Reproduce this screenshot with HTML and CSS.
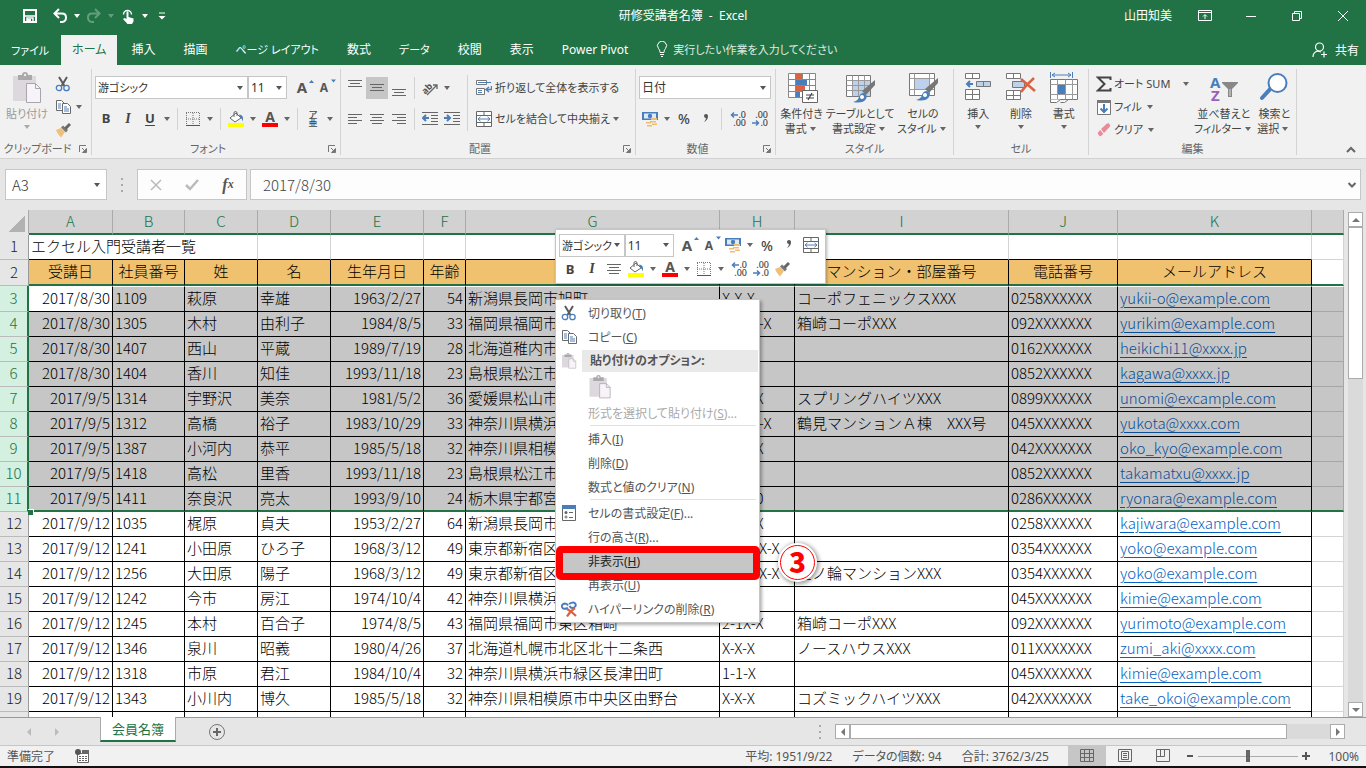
FILE: index.html
```html
<!DOCTYPE html>
<html lang="ja">
<head>
    <meta charset="UTF-8">
    <meta name="viewport" content="width=device-width, initial-scale=1.0">
    <title>研修受講者名簿 - Excel</title>
    <link rel="stylesheet" href="styles.css">
</head>
<body>

    <!-- アイコン -->
    <svg class="defs" aria-hidden="true">
        <symbol id="i-cut" viewBox="0 0 16 16"><path d="M4 1l5.500 9M12 1L6.500 10" stroke="#5a5a5a" stroke-width="2" fill="none"/><circle cx="4" cy="12" r="2.700" fill="none" stroke="#4a7ebb" stroke-width="1.300"/><circle cx="11.500" cy="12" r="2.700" fill="none" stroke="#4a7ebb" stroke-width="1.300"/></symbol>
        <symbol id="i-copy" viewBox="0 0 16 16"><path d="M1.500 1.500h5l3 3v7h-8z" fill="#fff" stroke="#6a6a6a"/><path d="M7.500 4.500h5l3 3v7h-8z" fill="#fff" stroke="#6a6a6a"/><path d="M3 5h3M3 7h3M3 9h3M9 8h3M9 10h5M9 12h5" stroke="#4a7ebb"/></symbol>
        <symbol id="i-brush" viewBox="0 0 16 16"><path d="M1 8l5-2 4 4-4 5.500C4 13 2 11 1 8z" fill="#eec07c"/><path d="M6 5.500l5 5 2-2.500-5-4.500z" fill="#777"/><path d="M10.500 6.500L15 2" stroke="#666" stroke-width="3"/></symbol>
        <symbol id="i-paste" viewBox="0 0 30 32"><path d="M1 4h23v25H1z" fill="#ddd8dd"/><path d="M6 3h4q0-3 3-3t3 3h4v5H6z" fill="#a9a9a9"/><circle cx="13" cy="3" r="1.200" fill="#eee"/><path d="M14.500 11.500h9l5 5v14h-14z" fill="#f7f3f9" stroke="#a9a5ad"/><path d="M23.500 11.500v5h5" fill="none" stroke="#a9a5ad"/></symbol>
        <symbol id="i-grow" viewBox="0 0 16 16"><path d="M11 5l2.500-3L16 5z" fill="#4a7ebb"/></symbol>
        <symbol id="i-shrink" viewBox="0 0 16 16"><path d="M11 1.500h5l-2.500 3z" fill="#4a7ebb"/></symbol>
        <symbol id="i-border" viewBox="0 0 16 16"><path d="M1.500 2v12M8 2v12M14.500 2v12M1 1.500h14M1 8h14" stroke="#777" stroke-dasharray="1 1"/><path d="M1 14.500h14" stroke="#555"/></symbol>
        <symbol id="i-fill" viewBox="0 0 16 16"><path d="M2 7l6-5 5 5-6 4z" fill="#fff" stroke="#666"/><path d="M6 6V2q0-1.500 1.500-1.500T9 2v3" fill="none" stroke="#666"/><path d="M11 3.500q5 0 4 7-1-3-3-4z" fill="#4a7ebb"/><path d="M0 12h16v4H0z" fill="#ff0"/></symbol>
        <symbol id="i-money" viewBox="0 0 16 16"><path d="M0 1h16v8H0z" fill="#4a7ebb"/><path d="M2 2.500h12v5H2z" fill="#dcebf7"/><circle cx="8" cy="5" r="2.200" fill="#4a7ebb"/><path d="M9 7h6v2H9zM8 10h6v1.500H8zM10 12.500h5V14h-5zM4 11h5v1.500H4zM5 14h5v1.500H5z" fill="#eebd72"/></symbol>
        <symbol id="i-comma" viewBox="0 0 16 16"><path d="M6 5a2 2 0 1 1 4 0q0 4-4 6 2-2 2-4-2 0-2-2z" fill="#555"/></symbol>
        <symbol id="i-merge" viewBox="0 0 16 16"><path d="M.500.500h15v15H.500zM.500 4.500h15M.500 11.500h15M8 .500v4M8 11.500v4" fill="#fff" stroke="#666"/><path d="M2 8h12M4.500 5.800L2 8l2.500 2.200M11.500 5.800L14 8l-2.500 2.200" fill="none" stroke="#4a7ebb"/></symbol>
        <symbol id="i-wrap" viewBox="0 0 16 16"><path d="M.500.500h10v4H.500zM.500 8.500h8v6H.500z" fill="#fff" stroke="#777"/><path d="M2 2.500h13M2 10.500h4M2 12.500h4" stroke="#4a7ebb"/><path d="M15.500 6v3.500H11M13 7l-3 2.500 3 2.500" stroke="#4a7ebb" stroke-width="1.400" fill="none"/></symbol>
        <symbol id="i-left" viewBox="0 0 16 16"><path d="M1 3.500h14M1 6.500h9M1 9.500h14M1 12.500h9" stroke="#666"/></symbol>
        <symbol id="i-center" viewBox="0 0 16 16"><path d="M1 3.500h14M3 6.500h10M1 9.500h14M3 12.500h10" stroke="#666"/></symbol>
        <symbol id="i-right" viewBox="0 0 16 16"><path d="M1 3.500h14M6 6.500h9M1 9.500h14M6 12.500h9" stroke="#666"/></symbol>
        <symbol id="i-top" viewBox="0 0 16 16"><path d="M1 .500h14M3 3.500h10M1 6.500h14" stroke="#666"/></symbol>
        <symbol id="i-middle" viewBox="0 0 16 16"><path d="M1 4.500h14M3 7.500h10M1 10.500h14" stroke="#666"/></symbol>
        <symbol id="i-bottom" viewBox="0 0 16 16"><path d="M1 9.500h14M3 12.500h10M1 15.500h14" stroke="#666"/></symbol>
        <symbol id="i-outdent" viewBox="0 0 16 16"><path d="M0 1.500h16M9 4.500h7M9 7.500h7M9 10.500h7M0 13.500h16" stroke="#666"/><path d="M7 7H2M4 4L1 7l3 3" stroke="#4a7ebb" stroke-width="2" fill="none"/></symbol>
        <symbol id="i-indent" viewBox="0 0 16 16"><path d="M0 1.500h16M9 4.500h7M9 7.500h7M9 10.500h7M0 13.500h16" stroke="#666"/><path d="M0 7h5M3 4l3 3-3 3" stroke="#4a7ebb" stroke-width="2" fill="none"/></symbol>
        <symbol id="i-arrow-l" viewBox="0 0 8 8"><path d="M8 4H2M4 1.500L1.500 4 4 6.500" stroke="#4a7ebb" stroke-width="1.500" fill="none"/></symbol>
        <symbol id="i-arrow-r" viewBox="0 0 8 8"><path d="M0 4h6M4 1.500L6.500 4 4 6.500" stroke="#4a7ebb" stroke-width="1.500" fill="none"/></symbol>
        <symbol id="i-launch" viewBox="0 0 8 8"><path d="M.500 7V.500H7" fill="none" stroke="#777"/><path d="M3 3l3 3" stroke="#777"/><path d="M7.500 3.500v4h-4z" stroke="#777" fill="#777"/></symbol>
        <symbol id="i-cond" viewBox="0 0 32 32"><path d="M2.500 1.500h27v24h-27zM2.500 7.500h27M2.500 13.500h27M2.500 19.500h27M9.500 1.500v24M16.500 1.500v24M23.500 1.500v24" fill="#fff" stroke="#888"/><path d="M10 2h6v5h-6zM10 14h9v5h-9z" fill="#dc6141"/><path d="M10 8h11v5H10zM10 20h4v5h-4z" fill="#4a7ebb"/><path d="M16.500 18.500h15v12h-15z" fill="#fff" stroke="#666"/><path d="M20 23h8M20 26h8M26 21l-4 7" stroke="#444" stroke-width="1.200"/></symbol>
        <symbol id="i-table" viewBox="0 0 32 32"><path d="M2.500 3.500h24v21h-24z" fill="#fff" stroke="#777"/><path d="M9 9h17v15H9z" fill="#bdd2ea"/><path d="M2.500 8.500h24M2.500 13.500h24M2.500 18.500h24M8.500 3.500v21M14.500 3.500v21M20.500 3.500v21" stroke="#999"/><path d="M31 8v5l-9 10-4-4z" fill="#777"/><path d="M9 30q5-1 6-5 1-4 5-4 4 2 2 6-3 5-13 3z" fill="#4a7ebb"/><circle cx="18" cy="25" r="2" fill="#fff"/></symbol>
        <symbol id="i-cell" viewBox="0 0 32 32"><path d="M2.500 1.500h25v22h-25z" fill="#fff" stroke="#777"/><path d="M2.500 6.500h25M2.500 17.500h25M7.500 1.500v22M22.500 1.500v22" stroke="#999"/><path d="M8 7h14v10H8z" fill="#bdd2ea"/><path d="M31 6v5l-9 10-4-4z" fill="#777"/><path d="M9 28q5-1 6-5 1-4 5-4 4 2 2 6-3 5-13 3z" fill="#4a7ebb"/><circle cx="18" cy="23" r="2" fill="#fff"/></symbol>
        <symbol id="i-insert" viewBox="0 0 32 32"><path d="M3.500 1.500h14v5h-14zM10.500 1.500v5M3.500 17.500h14v10h-14zM10.500 17.500v10M3.500 22.500h14" fill="#fff" stroke="#777"/><path d="M14.500 9.500h14v5h-14zM21.500 9.500v5" fill="#bdd2ea" stroke="#777"/><path d="M11 12H5M8 9l-3 3 3 3" stroke="#4a7ebb" stroke-width="2" fill="none"/></symbol>
        <symbol id="i-delete" viewBox="0 0 32 32"><path d="M1.500 1.500h14v5h-14zM8.500 1.500v5M1.500 18.500h14v9h-14zM8.500 18.500v9M1.500 23.500h14" fill="#fff" stroke="#777"/><path d="M7.500 9.500h12v6h-12z" fill="#bdd2ea" stroke="#777"/><path d="M16 7q7 6 14 12M29 6q-8 7-13 14" stroke="#dc6141" stroke-width="2.500" fill="none"/></symbol>
        <symbol id="i-format" viewBox="0 0 32 32"><path d="M2.500 0v6M24.500 0v6M4 3h19M7 1L4 3l3 2M20 1l3 2-3 2" stroke="#4a7ebb" fill="none"/><path d="M2.500 7.500h27v20h-27z" fill="#fff" stroke="#777"/><path d="M2.500 12.500h27M2.500 22.500h27M9.500 7.500v20M17.500 7.500v20M24.500 7.500v20" stroke="#999"/><path d="M10 13h7v9h-7z" fill="#4a7ebb"/><path d="M2.500 27.500v3h6l4-3M12.500 30.500h4l4-3" fill="#fff" stroke="#777"/></symbol>
        <symbol id="i-sum" viewBox="0 0 16 16"><path d="M14.500 4V1.500H2L8.500 8 2 14.500h12.500V12" fill="none" stroke="#444" stroke-width="2"/></symbol>
        <symbol id="i-down" viewBox="0 0 16 16"><path d="M1.500 2.500h13v13h-13z" fill="#fff" stroke="#777"/><path d="M1 1h14v3H1z" fill="#777"/><path d="M8 5v8M4.500 9.500L8 13l3.500-3.500" fill="none" stroke="#4a7ebb" stroke-width="2"/></symbol>
        <symbol id="i-erase" viewBox="0 0 16 16"><path d="M5 7l6-5.500q1-.500 2 0l1 1.500q.500 1-.500 2L8 11z" fill="#ea8b9b"/><path d="M4.300 8l3 4-2.300 2q-1 .500-2-.500l-1-1.500q-.500-1 .300-2z" fill="#ea8b9b"/></symbol>
        <symbol id="i-filter" viewBox="0 0 16 16"><path d="M0 1h16v1L10 8v8H6V8L0 2z" fill="#888"/><path d="M8 8v7" stroke="#ddd"/></symbol>
        <symbol id="i-find" viewBox="0 0 32 32"><path d="M13 16L4 26" stroke="#4a7ebb" stroke-width="4" stroke-linecap="round"/><circle cx="19.500" cy="11" r="9" fill="#fff" stroke="#4a7ebb" stroke-width="2"/></symbol>
        <symbol id="i-cellformat" viewBox="0 0 16 16"><path d="M1.500 1.500h13v14h-13z" fill="#fff" stroke="#666"/><path d="M1 0h14v4H1z" fill="#4a7ebb"/><circle cx="5" cy="7.500" r="1.500" fill="#666"/><circle cx="5" cy="12" r="1" fill="none" stroke="#666"/><path d="M8 7.500h4M8 12.500h4" stroke="#666"/></symbol>
        <symbol id="i-unlink" viewBox="0 0 16 16"><path d="M7 7q-5 2-6-1-.500-3 3-3.500 2 0 3 2M8 3q5-3 6.500 0 1 3-3 4-2 0-3-2" fill="none" stroke="#4a7ebb" stroke-width="2"/><path d="M6 8q4 2 9 7M14 7q-5 3-8 8.500" stroke="#dc6141" stroke-width="2.200" fill="none"/></symbol>
    </svg>

    <header class="titlebar">
        <div class="quick">
            <button class="qbtn" aria-label="上書き保存"><svg width="16" height="16" viewBox="0 0 16 16"><path d="M2 2h12v12H2z" fill="none" stroke="#fff" stroke-width="2"/><path d="M3 8h10M5 14v-4h6v4" fill="none" stroke="#fff" stroke-width="1.500"/><path d="M5 11h4v3H5z" fill="#fff"/></svg></button>
            <button class="qbtn" aria-label="元に戻す"><svg width="16" height="16" viewBox="0 0 16 16"><path d="M3 5.500h7q4 0 4 4t-4 4.500H8M7 1L2.500 5.500 7 10" fill="none" stroke="#fff" stroke-width="2"/></svg></button>
            <i class="tri"></i>
            <button class="qbtn dim" aria-label="やり直し"><svg width="16" height="16" viewBox="0 0 16 16"><path d="M13 5.500H6q-4 0-4 4T6 14h2M9 1l4.500 4.500L9 10" fill="none" stroke="#fff" stroke-width="2"/></svg></button>
            <i class="tri dim"></i>
            <button class="qbtn" aria-label="タッチ"><svg width="16" height="16" viewBox="0 0 16 16"><path d="M3.500 6.500a4 4 0 1 1 8 0" fill="none" stroke="#fff" stroke-width="1.500"/><path d="M6.500 4q1-1.500 2 0v5l5 1.500v3L12 16H7.500L3 11l1.500-1 2 1z" fill="#fff"/></svg></button>
            <i class="tri"></i>
            <button class="qbtn" aria-label="カスタマイズ"><svg width="8" height="8" viewBox="0 0 8 8"><path d="M1 1h6" stroke="#fff"/><path d="M.500 4h7L4 7.500z" fill="#fff"/></svg></button>
        </div>
        <h1 class="title">研修受講者名簿&nbsp; -&nbsp; Excel</h1>
        <div class="window-controls">
            <span class="user">山田知美</span>
            <button aria-label="リボンの表示オプション"><svg width="14" height="12" viewBox="0 0 14 12"><path d="M.500.500h13v10H.500zM.500 2.500h13M7 9V5M5 6.500L7 4.500l2 2" fill="none" stroke="#fff"/></svg></button>
            <button aria-label="最小化"><svg width="12" height="12" viewBox="0 0 12 12"><path d="M1 6.500h10" stroke="#fff"/></svg></button>
            <button aria-label="元に戻す(縮小)"><svg width="12" height="12" viewBox="0 0 12 12"><path d="M1.500 3.500h7v7h-7zM3.500 3V1.500h7v7H9" fill="none" stroke="#fff"/></svg></button>
            <button aria-label="閉じる"><svg width="12" height="12" viewBox="0 0 12 12"><path d="M1 1l10 10M11 1L1 11" stroke="#fff"/></svg></button>
        </div>
    </header>

    <nav class="tabs">
        <button class="tab kana file">ファイル</button>
        <button class="tab active">ホーム</button>
        <button class="tab">挿入</button>
        <button class="tab">描画</button>
        <button class="tab kana">ページ レイアウト</button>
        <button class="tab">数式</button>
        <button class="tab kana">データ</button>
        <button class="tab">校閲</button>
        <button class="tab">表示</button>
        <button class="tab">Power Pivot</button>
        <button class="tab kana tellme"><svg width="12" height="16" viewBox="0 0 12 16"><path d="M4 11.500Q4 9 2.500 7.500a4.500 4.500 0 1 1 7 0Q8 9 8 11.500zM4 13.500h4M5 15.500h2" fill="none" stroke="#fff"/></svg>実行したい作業を入力してください</button>
        <button class="tab share"><svg width="16" height="16" viewBox="0 0 16 16"><circle cx="7.500" cy="5" r="4" fill="none" stroke="#fff" stroke-width="1.200"/><path d="M1 15q0-5 5-6l3 1M12 9.500v6M9 12.500h6" fill="none" stroke="#fff" stroke-width="1.200"/></svg>共有</button>
    </nav>

    <section class="ribbon">
        <div class="group g-clip">
            <div class="body">
                <button class="big disabled"><svg width="30" height="32"><use href="#i-paste"/></svg><span>貼り付け</span><i class="tri"></i></button>
                <div class="stack">
                    <button class="line" aria-label="切り取り"><svg width="16" height="16"><use href="#i-cut"/></svg></button>
                    <button class="line" aria-label="コピー"><svg width="16" height="16"><use href="#i-copy"/></svg><i class="tri"></i></button>
                    <button class="line" aria-label="書式のコピー"><svg width="16" height="16"><use href="#i-brush"/></svg></button>
                </div>
            </div>
            <div class="name">クリップボード<svg width="8" height="8"><use href="#i-launch"/></svg></div>
        </div>

        <div class="group g-font">
            <div class="body rows">
                <div class="row">
                    <span class="combo wide"><select aria-label="フォント"><option>游ゴシック</option></select></span>
                    <span class="combo size"><select aria-label="フォント サイズ"><option>11</option></select></span>
                    <button class="ic letter" aria-label="フォント サイズの拡大">A<svg width="16" height="16"><use href="#i-grow"/></svg></button>
                    <button class="ic letter small" aria-label="フォント サイズの縮小">A<svg width="16" height="16"><use href="#i-shrink"/></svg></button>
                </div>
                <div class="row">
                    <button class="ic bold">B</button>
                    <button class="ic italic">I</button>
                    <button class="ic under">U</button>
                    <i class="tri"></i><i class="sep"></i>
                    <button class="ic" aria-label="罫線"><svg width="16" height="16"><use href="#i-border"/></svg></button>
                    <i class="tri"></i><i class="sep"></i>
                    <button class="ic" aria-label="塗りつぶしの色"><svg width="16" height="16"><use href="#i-fill"/></svg></button>
                    <i class="tri"></i>
                    <button class="ic color"><span>A</span></button>
                    <i class="tri"></i><i class="sep"></i>
                    <button class="ic ruby"><span>ア</span><span>亜</span></button>
                    <i class="tri"></i>
                </div>
            </div>
            <div class="name">フォント<svg width="8" height="8"><use href="#i-launch"/></svg></div>
        </div>

        <div class="group g-align">
            <div class="body">
                <div class="rows">
                    <div class="row">
                        <button class="ic" aria-label="上揃え"><svg width="16" height="16"><use href="#i-top"/></svg></button>
                        <button class="ic on" aria-label="上下中央揃え"><svg width="16" height="16"><use href="#i-middle"/></svg></button>
                        <button class="ic" aria-label="下揃え"><svg width="16" height="16"><use href="#i-bottom"/></svg></button>
                        <i class="sep"></i>
                        <button class="ic" aria-label="方向"><svg width="18" height="18" viewBox="0 0 18 18"><text x="1" y="12" transform="rotate(-45 7 10)" font-family="Noto Sans" font-size="9" font-weight="bold" fill="#555">ab</text><path d="M6 16l10-10M12 6h4v4" stroke="#666" stroke-width="1.300" fill="none"/></svg></button>
                        <i class="tri"></i>
                    </div>
                    <div class="row">
                        <button class="ic" aria-label="左揃え"><svg width="16" height="16"><use href="#i-left"/></svg></button>
                        <button class="ic" aria-label="中央揃え"><svg width="16" height="16"><use href="#i-center"/></svg></button>
                        <button class="ic" aria-label="右揃え"><svg width="16" height="16"><use href="#i-right"/></svg></button>
                        <i class="sep"></i>
                        <button class="ic" aria-label="インデントを減らす"><svg width="16" height="16"><use href="#i-outdent"/></svg></button>
                        <button class="ic" aria-label="インデントを増やす"><svg width="16" height="16"><use href="#i-indent"/></svg></button>
                    </div>
                </div>
                <i class="sep tall"></i>
                <div class="rows">
                    <div class="row"><button class="line"><svg width="16" height="16"><use href="#i-wrap"/></svg>折り返して全体を表示する</button></div>
                    <div class="row"><button class="line"><svg width="16" height="16"><use href="#i-merge"/></svg>セルを結合して中央揃え</button><i class="tri end"></i></div>
                </div>
            </div>
            <div class="name">配置<svg width="8" height="8"><use href="#i-launch"/></svg></div>
        </div>

        <div class="group g-num">
            <div class="body rows">
                <div class="row"><span class="combo full"><select aria-label="表示形式"><option>日付</option></select></span></div>
                <div class="row">
                    <button class="ic" aria-label="通貨表示形式"><svg width="16" height="16"><use href="#i-money"/></svg></button>
                    <i class="tri"></i>
                    <button class="ic percent">%</button>
                    <button class="ic" aria-label="桁区切りスタイル"><svg width="16" height="16"><use href="#i-comma"/></svg></button>
                    <i class="sep"></i>
                    <button class="ic dec"><span><svg width="8" height="8"><use href="#i-arrow-l"/></svg>.0</span><span>.00</span></button>
                    <button class="ic dec"><span>.00</span><span><svg width="8" height="8"><use href="#i-arrow-r"/></svg>.0</span></button>
                </div>
            </div>
            <div class="name">数値<svg width="8" height="8"><use href="#i-launch"/></svg></div>
        </div>

        <div class="group g-style">
            <div class="body">
                <button class="big"><svg width="32" height="32"><use href="#i-cond"/></svg><span>条件付き</span><span>書式<i class="tri"></i></span></button>
                <button class="big"><svg width="32" height="32"><use href="#i-table"/></svg><span>テーブルとして</span><span>書式設定<i class="tri"></i></span></button>
                <button class="big"><svg width="32" height="32"><use href="#i-cell"/></svg><span>セルの</span><span>スタイル<i class="tri"></i></span></button>
            </div>
            <div class="name">スタイル</div>
        </div>

        <div class="group g-cells">
            <div class="body">
                <button class="big"><svg width="32" height="32"><use href="#i-insert"/></svg><span>挿入</span><i class="tri"></i></button>
                <button class="big"><svg width="32" height="32"><use href="#i-delete"/></svg><span>削除</span><i class="tri"></i></button>
                <button class="big"><svg width="32" height="32"><use href="#i-format"/></svg><span>書式</span><i class="tri"></i></button>
            </div>
            <div class="name">セル</div>
        </div>

        <div class="group g-edit">
            <div class="body">
                <div class="stack">
                    <button class="line"><svg width="16" height="16"><use href="#i-sum"/></svg>オート SUM<i class="tri"></i></button>
                    <button class="line"><svg width="16" height="16"><use href="#i-down"/></svg>フィル<i class="tri"></i></button>
                    <button class="line"><svg width="16" height="16"><use href="#i-erase"/></svg>クリア<i class="tri"></i></button>
                </div>
                <button class="big"><span class="sort"><span class="az"><b>A</b><b>Z</b></span><svg width="16" height="16"><use href="#i-filter"/></svg></span><span>並べ替えと</span><span>フィルター<i class="tri"></i></span></button>
                <button class="big"><svg width="32" height="32"><use href="#i-find"/></svg><span>検索と</span><span>選択<i class="tri"></i></span></button>
            </div>
            <div class="name">編集</div>
        </div>
        <button class="collapse" aria-label="リボンを折りたたむ"><svg width="10" height="8" viewBox="0 0 10 8"><path d="M1 6l4-4 4 4" fill="none" stroke="#666" stroke-width="2"/></svg></button>
    </section>

    <section class="formula-bar">
        <span class="combo namebox"><select aria-label="名前ボックス"><option>A3</option></select></span>
        <i class="dots"></i>
        <div class="fx">
            <button aria-label="キャンセル"><svg width="12" height="12" viewBox="0 0 12 12"><path d="M1 1l10 10M11 1L1 11" stroke="#bbb" stroke-width="1.500"/></svg></button>
            <button aria-label="入力"><svg width="14" height="12" viewBox="0 0 14 12"><path d="M1 6l4 4 8-9" fill="none" stroke="#bbb" stroke-width="2.500"/></svg></button>
            <button class="fn">f<small>x</small></button>
        </div>
        <div class="formula">
            <input type="text" aria-label="数式バー" value="2017/8/30">
            <svg width="10" height="8" viewBox="0 0 10 8"><path d="M1.500 2L5 5.500 8.500 2" fill="none" stroke="#666" stroke-width="2"/></svg>
        </div>
    </section>

    <main class="sheet">
        <div class="grid">
            <table>
                <colgroup>
                    <col class="c-head"><col class="c-a"><col class="c-b"><col class="c-name"><col class="c-name"><col class="c-e"><col class="c-f"><col class="c-g"><col class="c-h"><col class="c-i"><col class="c-j"><col class="c-k"><col>
                </colgroup>
                <thead>
                    <tr><th class="corner"></th><th>A</th><th>B</th><th>C</th><th>D</th><th>E</th><th>F</th><th>G</th><th>H</th><th>I</th><th>J</th><th>K</th><th></th></tr>
                </thead>
                <tbody>
                    <tr class="caption"><th>1</th><td colspan="3">エクセル入門受講者一覧</td><td></td><td></td><td></td><td></td><td></td><td></td><td></td><td></td><td></td></tr>
                    <tr class="fields"><th>2</th><td>受講日</td><td>社員番号</td><td>姓</td><td>名</td><td>生年月日</td><td>年齢</td><td></td><td></td><td>マンション・部屋番号</td><td>電話番号</td><td>メールアドレス</td><td></td></tr>
                    <tr class="sel first"><th>3</th><td>2017/8/30</td><td>1109</td><td>萩原</td><td>幸雄</td><td>1963/2/27</td><td>54</td><td>新潟県長岡市旭町</td><td>X-X-X</td><td>コーポフェニックスXXX</td><td>0258XXXXXX</td><td><a href="#">yukii-o@example.com</a></td><td></td></tr>
                    <tr class="sel"><th>4</th><td>2017/8/30</td><td>1305</td><td>木村</td><td>由利子</td><td>1984/8/5</td><td>33</td><td>福岡県福岡市</td><td>12-1X-X</td><td>箱崎コーポXXX</td><td>092XXXXXXX</td><td><a href="#">yurikim@example.com</a></td><td></td></tr>
                    <tr class="sel"><th>5</th><td>2017/8/30</td><td>1407</td><td>西山</td><td>平蔵</td><td>1989/7/19</td><td>28</td><td>北海道稚内市</td><td>X-XX</td><td></td><td>0162XXXXXX</td><td><a href="#">heikichi11@xxxx.jp</a></td><td></td></tr>
                    <tr class="sel"><th>6</th><td>2017/8/30</td><td>1404</td><td>香川</td><td>知佳</td><td>1993/11/18</td><td>23</td><td>島根県松江市</td><td></td><td></td><td>0852XXXXXX</td><td><a href="#">kagawa@xxxx.jp</a></td><td></td></tr>
                    <tr class="sel"><th>7</th><td>2017/9/5</td><td>1314</td><td>宇野沢</td><td>美奈</td><td>1981/5/2</td><td>36</td><td>愛媛県松山市</td><td>2-1X-X</td><td>スプリングハイツXXX</td><td>0899XXXXXX</td><td><a href="#">unomi@excample.com</a></td><td></td></tr>
                    <tr class="sel"><th>8</th><td>2017/9/5</td><td>1312</td><td>高橋</td><td>裕子</td><td>1983/10/29</td><td>33</td><td>神奈川県横浜市</td><td>12-1X-X</td><td>鶴見マンションＡ棟　XXX号</td><td>045XXXXXXX</td><td><a href="#">yukota@xxxx.com</a></td><td></td></tr>
                    <tr class="sel"><th>9</th><td>2017/9/5</td><td>1387</td><td>小河内</td><td>恭平</td><td>1985/5/18</td><td>32</td><td>神奈川県相模原市</td><td>2-1X-X</td><td></td><td>042XXXXXXX</td><td><a href="#">oko_kyo@example.com</a></td><td></td></tr>
                    <tr class="sel"><th>10</th><td>2017/9/5</td><td>1418</td><td>高松</td><td>里香</td><td>1993/11/18</td><td>23</td><td>島根県松江市</td><td></td><td></td><td>0852XXXXXX</td><td><a href="#">takamatxu@xxxx.jp</a></td><td></td></tr>
                    <tr class="sel last"><th>11</th><td>2017/9/5</td><td>1411</td><td>奈良沢</td><td>亮太</td><td>1993/9/10</td><td>24</td><td>栃木県宇都宮市</td><td>1-X-20</td><td></td><td>0286XXXXXX</td><td><a href="#">ryonara@example.com</a></td><td></td></tr>
                    <tr><th>12</th><td>2017/9/12</td><td>1035</td><td>梶原</td><td>貞夫</td><td>1953/2/27</td><td>64</td><td>新潟県長岡市</td><td>2-1X-X</td><td></td><td>0258XXXXXX</td><td><a href="#">kajiwara@example.com</a></td><td></td></tr>
                    <tr><th>13</th><td>2017/9/12</td><td>1241</td><td>小田原</td><td>ひろ子</td><td>1968/3/12</td><td>49</td><td>東京都新宿区</td><td>12-11X-X</td><td></td><td>0354XXXXXX</td><td><a href="#">yoko@example.com</a></td><td></td></tr>
                    <tr><th>14</th><td>2017/9/12</td><td>1256</td><td>大田原</td><td>陽子</td><td>1968/3/12</td><td>49</td><td>東京都新宿区</td><td>12-11X-X</td><td>三ノ輪マンションXXX</td><td>0354XXXXXX</td><td><a href="#">yoko@example.com</a></td><td></td></tr>
                    <tr><th>15</th><td>2017/9/12</td><td>1242</td><td>今市</td><td>房江</td><td>1974/10/4</td><td>42</td><td>神奈川県横浜市</td><td>1-1-X</td><td></td><td>045XXXXXXX</td><td><a href="#">kimie@example.com</a></td><td></td></tr>
                    <tr><th>16</th><td>2017/9/12</td><td>1245</td><td>本村</td><td>百合子</td><td>1974/8/5</td><td>43</td><td>福岡県福岡市東区箱崎</td><td>2-1X-X</td><td>箱崎コーポXXX</td><td>092XXXXXXX</td><td><a href="#">yurimoto@example.com</a></td><td></td></tr>
                    <tr><th>17</th><td>2017/9/12</td><td>1346</td><td>泉川</td><td>昭義</td><td>1980/4/26</td><td>37</td><td>北海道札幌市北区北十二条西</td><td>X-X-X</td><td>ノースハウスXXX</td><td>011XXXXXXX</td><td><a href="#">zumi_aki@xxxx.com</a></td><td></td></tr>
                    <tr><th>18</th><td>2017/9/12</td><td>1318</td><td>市原</td><td>君江</td><td>1984/10/4</td><td>32</td><td>神奈川県横浜市緑区長津田町</td><td>1-1-X</td><td></td><td>045XXXXXXX</td><td><a href="#">kimie@example.com</a></td><td></td></tr>
                    <tr><th>19</th><td>2017/9/12</td><td>1343</td><td>小川内</td><td>博久</td><td>1985/5/18</td><td>32</td><td>神奈川県相模原市中央区由野台</td><td>X-X-X</td><td>コズミックハイツXXX</td><td>042XXXXXXX</td><td><a href="#">take_okoi@example.com</a></td><td></td></tr>
                    <tr><th></th><td></td><td></td><td></td><td></td><td></td><td></td><td></td><td></td><td></td><td></td><td></td><td></td></tr>
                </tbody>
            </table>
            <i class="handle"></i>
        </div>
        <div class="vscroll">
            <button class="arrow up" aria-label="上へ"></button>
            <div class="track"><div class="thumb"></div></div>
            <button class="arrow down" aria-label="下へ"></button>
        </div>

        <div class="mini">
            <div class="row">
                <span class="combo m-font"><select aria-label="フォント"><option>游ゴシック</option></select></span>
                <span class="combo m-size"><select aria-label="サイズ"><option>11</option></select></span>
                <button class="ic letter" aria-label="拡大">A<svg width="16" height="16"><use href="#i-grow"/></svg></button>
                <button class="ic letter small" aria-label="縮小">A<svg width="16" height="16"><use href="#i-shrink"/></svg></button>
                <button class="ic" aria-label="通貨"><svg width="16" height="16"><use href="#i-money"/></svg></button>
                <i class="tri"></i>
                <button class="ic percent">%</button>
                <button class="ic" aria-label="桁区切り"><svg width="16" height="16"><use href="#i-comma"/></svg></button>
                <button class="ic" aria-label="結合"><svg width="16" height="16"><use href="#i-merge"/></svg></button>
            </div>
            <div class="row">
                <button class="ic bold">B</button>
                <button class="ic italic">I</button>
                <button class="ic" aria-label="中央揃え"><svg width="16" height="16"><use href="#i-center"/></svg></button>
                <button class="ic" aria-label="塗りつぶし"><svg width="16" height="16"><use href="#i-fill"/></svg></button>
                <i class="tri"></i>
                <button class="ic color"><span>A</span></button>
                <i class="tri"></i>
                <button class="ic" aria-label="罫線"><svg width="16" height="16"><use href="#i-border"/></svg></button>
                <i class="tri"></i>
                <button class="ic dec"><span><svg width="8" height="8"><use href="#i-arrow-l"/></svg>.0</span><span>.00</span></button>
                <button class="ic dec"><span>.00</span><span><svg width="8" height="8"><use href="#i-arrow-r"/></svg>.0</span></button>
                <button class="ic" aria-label="書式のコピー"><svg width="16" height="16"><use href="#i-brush"/></svg></button>
            </div>
        </div>

        <div class="menu">
            <button class="item"><svg width="16" height="16"><use href="#i-cut"/></svg><span>切り取り(<u>T</u>)</span></button>
            <button class="item"><svg width="16" height="16"><use href="#i-copy"/></svg><span>コピー(<u>C</u>)</span></button>
            <div class="item heading"><svg width="16" height="16"><use href="#i-paste"/></svg><strong>貼り付けのオプション:</strong></div>
            <button class="item paste" aria-label="貼り付け"><span></span><svg width="24" height="24"><use href="#i-paste"/></svg></button>
            <button class="item off"><span></span><span>形式を選択して貼り付け(<u>S</u>)...</span></button>
            <hr>
            <button class="item"><span></span><span>挿入(<u>I</u>)</span></button>
            <button class="item"><span></span><span>削除(<u>D</u>)</span></button>
            <button class="item"><span></span><span>数式と値のクリア(<u>N</u>)</span></button>
            <hr>
            <button class="item"><svg width="16" height="16"><use href="#i-cellformat"/></svg><span>セルの書式設定(<u>F</u>)...</span></button>
            <button class="item"><span></span><span>行の高さ(<u>R</u>)...</span></button>
            <button class="item hover"><span></span><span>非表示(<u>H</u>)</span></button>
            <button class="item"><span></span><span>再表示(<u>U</u>)</span></button>
            <button class="item"><svg width="16" height="16"><use href="#i-unlink"/></svg><span>ハイパーリンクの削除(<u>R</u>)</span></button>
        </div>
        <div class="frame"></div>
        <div class="step">3</div>
    </main>

    <section class="sheet-tabs">
        <button class="nav prev" aria-label="前のシート"></button>
        <button class="nav next" aria-label="次のシート"></button>
        <button class="sheet-tab">会員名簿</button>
        <button class="add" aria-label="新しいシート"><svg width="16" height="16" viewBox="0 0 16 16"><circle cx="8" cy="8" r="7.500" fill="none" stroke="#777"/><path d="M8 4v8M4 8h8" stroke="#666" stroke-width="2"/></svg></button>
        <i class="dots"></i>
        <div class="hscroll">
            <button class="arrow left" aria-label="左へ"></button>
            <div class="track"><div class="thumb"></div></div>
            <button class="arrow right" aria-label="右へ"></button>
        </div>
    </section>

    <footer class="status">
        <span>準備完了</span>
        <svg width="14" height="14" viewBox="0 0 14 14"><path d="M2.500 4.500h11v9h-11z" fill="#fff" stroke="#666"/><path d="M7 1h7v4H7z" fill="#666"/><circle cx="3" cy="3" r="3" fill="#555"/><path d="M4 7.500h8M4 9.500h8M4 11.500h8" stroke="#666" stroke-dasharray="2 1"/></svg>
        <div class="sums"><span>平均: 1951/9/22</span><span>データの個数: 94</span><span>合計: 3762/3/25</span></div>
        <button class="view on" aria-label="標準"><svg width="14" height="14" viewBox="0 0 14 14"><path d="M.500.500h13v12H.500zM.500 4.500h13M.500 8.500h13M4.500.500v12M9.500.500v12" fill="none" stroke="#666"/></svg></button>
        <button class="view" aria-label="ページ レイアウト"><svg width="14" height="14" viewBox="0 0 14 14"><path d="M.500.500h13v12H.500zM3.500 2.500h7v8h-7zM5 4.500h4M5 6.500h4M5 8.500h4" fill="none" stroke="#666"/></svg></button>
        <button class="view" aria-label="改ページ プレビュー"><svg width="14" height="14" viewBox="0 0 14 14"><path d="M.500.500h13v12H.500zM.500 7.500h8v-7M4.500.500v7" fill="none" stroke="#666"/></svg></button>
        <button class="zoom" aria-label="縮小"><svg width="8" height="8" viewBox="0 0 8 8"><path d="M1 4h6" stroke="#555" stroke-width="2"/></svg></button>
        <input type="range" aria-label="ズーム" min="0" max="200" value="100">
        <button class="zoom" aria-label="拡大"><svg width="8" height="8" viewBox="0 0 8 8"><path d="M0 4h8M4 0v8" stroke="#555" stroke-width="2"/></svg></button>
        <span class="rate">100%</span>
    </footer>

</body>
</html>
```
FILE: styles.css
```css
* {
    box-sizing: border-box;
}
body {
    margin: 0;
    height: 100vh;
    display: flex;
    flex-direction: column;
    overflow: hidden;
    background: #e6e6e6;
    border-bottom: 2px solid #111;
    font: 12px/15px "Noto Sans", "Noto Sans CJK JP", sans-serif;
    font-feature-settings: "palt";
    color: #444;
}
button, select, input {
    font: inherit;
    font-feature-settings: inherit;
    color: inherit;
    background: none;
    border: none;
    padding: 0;
    margin: 0;
    white-space: nowrap;
}
svg {
    flex: none;
    display: block;
}
.defs {
    display: none;
}
.tri {
    flex: none;
    display: inline-flex;
    width: 12px;
    justify-content: center;
    align-items: center;
    color: #666;
}
.tri::after, .combo::after {
    content: "";
    border: 3px solid transparent;
    border-top: 4px solid;
    border-bottom: 0;
}

/* タイトルバー */
.titlebar {
    flex: none;
    height: 31px;
    display: grid;
    grid-template-columns: 1fr auto 1fr;
    align-items: center;
    background: #217346;
    color: #fff;
}
.quick {
    display: flex;
    align-items: center;
    padding-left: 17px;
}
.quick .tri {
    color: #fff;
    width: 8px;
}
.qbtn {
    display: flex;
    justify-content: center;
    width: 26px;
}
.qbtn + .qbtn {
    margin-left: 4px;
}
.quick .dim {
    opacity: 0.3;
}
.title {
    margin: 0;
    font-size: 12px;
    font-weight: normal;
}
.window-controls {
    display: flex;
    justify-content: flex-end;
    align-items: center;
}
.window-controls button {
    width: 46px;
    height: 30px;
    display: flex;
    align-items: center;
    justify-content: center;
}
.user {
    margin-right: 10px;
}

/* リボンのタブ */
.tabs {
    flex: none;
    height: 34px;
    display: flex;
    align-items: flex-end;
    background: #217346;
    color: #fff;
}
.tab {
    height: 30px;
    padding: 0 14px 2px;
    display: flex;
    align-items: center;
}
.tab.kana {
    font-size: 11px;
}
.tab.file {
    padding: 0 12px 0 11px;
}
.tab.active {
    background: #f1f1f1;
    color: #217346;
    padding: 0 11px 2px;
}
.tellme {
    gap: 5px;
    color: #e0ece4;
}
.share {
    margin-left: auto;
    padding: 0 7px;
    gap: 7px;
}

/* リボン */
.ribbon {
    flex: none;
    height: 94px;
    display: flex;
    background: #f1f1f1;
    border-bottom: 1px solid #d2d2d2;
}
.group {
    flex: none;
    display: flex;
    flex-direction: column;
    margin: 4px 0 3px;
    border-right: 1px solid #d4d4d4;
}
.g-clip { width: 92px; }
.g-font { width: 249px; }
.g-align { width: 295px; }
.g-num { width: 140px; }
.g-style { width: 178px; }
.g-cells { width: 135px; }
.g-edit { width: 208px; }
.body {
    flex: 1;
    display: flex;
    padding: 3px 3px 0;
}
.body.rows, .rows {
    flex-direction: column;
}
.row {
    display: flex;
    align-items: center;
    height: 31px;
}
.name {
    position: relative;
    display: flex;
    justify-content: center;
    align-items: center;
    height: 14px;
    font-size: 11px;
    color: #666;
}
.g-clip .name, .g-font .name, .g-align .name, .g-num .name {
    padding-right: 16px;
}
.name svg {
    position: absolute;
    right: 4px;
    bottom: 2px;
}
.ic {
    flex: none;
    width: 22px;
    height: 22px;
    display: flex;
    align-items: center;
    justify-content: center;
}
.ic.on {
    background: #c6c6c6;
}
.sep {
    flex: none;
    width: 1px;
    height: 22px;
    margin: 0 4px;
    background: #d2d2d2;
}
.sep.tall {
    height: 56px;
    margin: 3px 4px 0;
}
.line {
    display: flex;
    align-items: center;
    gap: 3px;
    padding-left: 4px;
    font-size: 11px;
}
.end {
    margin-left: auto;
}
.bold, .under {
    font-weight: bold;
    font-size: 13px;
}
.under {
    text-decoration: underline;
    text-underline-offset: 2px;
}
.italic {
    font: italic bold 14px "Liberation Serif", serif;
}
.percent {
    font-size: 14px;
    font-weight: 500;
}
.letter {
    position: relative;
    font-size: 15px;
    font-weight: bold;
    color: #555;
    padding-right: 4px;
}
.letter.small {
    font-size: 12px;
}
.letter svg {
    position: absolute;
    right: 1px;
    top: 1px;
}
.color span {
    width: 16px;
    height: 16px;
    border-bottom: 4px solid #f00;
    font-weight: bold;
    font-size: 14px;
    line-height: 12px;
    color: #555;
}
.ruby, .dec {
    flex-direction: column;
    font-size: 9px;
    line-height: 8px;
    font-weight: 500;
}
.dec span {
    display: flex;
    width: 18px;
    justify-content: flex-end;
}
.combo {
    display: flex;
    align-items: center;
    height: 23px;
    padding-right: 4px;
    background: #fff;
    border: 1px solid #c6c6c6;
    color: #555;
}
.combo select {
    flex: 1;
    min-width: 0;
    appearance: none;
    padding-left: 2px;
    color: #333;
    outline: none;
}
.wide, .m-font { font-size: 11px; }
.wide { width: 157px; }
.size { width: 40px; margin-right: 6px; }
.full { width: 132px; }
.m-font { width: 68px; }
.m-size { width: 51px; margin-right: 4px; }
.big {
    flex: 1 0 auto;
    display: flex;
    flex-direction: column;
    align-items: center;
    font-size: 11px;
}
.big > svg {
    margin-bottom: 2px;
}
.big > .tri {
    height: 12px;
}
.big span {
    display: flex;
    justify-content: center;
}
.disabled {
    color: #999;
}
.disabled .tri {
    color: #aaa;
}
.stack {
    display: flex;
    flex-direction: column;
    width: 36px;
}
.stack .line {
    height: 23px;
    gap: 2px;
}
.g-clip .big {
    flex: none;
    width: 48px;
}
.g-edit .stack {
    width: 100px;
}
.g-edit .line:first-child .tri {
    margin-left: auto;
}
.big .sort {
    align-items: center;
    height: 34px;
    gap: 1px;
}
.big .az {
    flex-direction: column;
    font-size: 15px;
    line-height: 13px;
    color: #4a7ebb;
}
.az b + b {
    color: #9b5fb9;
}
.collapse {
    margin: auto 10px 4px auto;
}

/* 数式バー */
.formula-bar {
    flex: none;
    height: 51px;
    display: flex;
    align-items: center;
    padding: 0 5px;
    font: 300 15px/22px "Noto Sans CJK JP", sans-serif;
    font-feature-settings: normal;
}
.namebox {
    width: 102px;
    height: 31px;
    padding-right: 6px;
}
.namebox select {
    padding-left: 6px;
}
.dots {
    width: 2px;
    height: 14px;
    margin: 0 14px;
    background: repeating-linear-gradient(#aaa 0 2px, transparent 2px 6px);
}
.fx {
    width: 110px;
    height: 31px;
    display: flex;
    background: #fdfdfd;
    border: 1px solid #c6c6c6;
    margin-right: 3px;
}
.fx button {
    flex: 1;
    display: flex;
    align-items: center;
    justify-content: center;
}
.fx .fn {
    font: italic bold 16px "Liberation Serif", serif;
    color: #555;
}
.fn small {
    font-size: 12px;
}
.formula {
    flex: 1;
    height: 31px;
    display: flex;
    align-items: center;
    padding: 0 3px 0 12px;
    background: #fdfdfd;
    border: 1px solid #c6c6c6;
}
.formula input {
    flex: 1;
    outline: none;
}

/* シート */
.sheet {
    flex: 1;
    min-height: 0;
    display: flex;
    position: relative;
}
.grid {
    flex: 1;
    overflow: hidden;
    position: relative;
    background: #fff;
    font: 300 15px/22px "Noto Sans CJK JP", sans-serif;
    font-feature-settings: normal;
    color: #000;
}
table {
    width: 100%;
    table-layout: fixed;
    border-collapse: separate;
    border-spacing: 0;
}
.c-head { width: 29px; }
.c-a { width: 84px; }
.c-b { width: 72px; }
.c-name { width: 73px; }
.c-e { width: 93px; }
.c-f { width: 42px; }
.c-g { width: 254px; }
.c-h { width: 75px; }
.c-i { width: 214px; }
.c-j { width: 109px; }
.c-k { width: 194px; }
tbody tr {
    height: 25px;
}
td, th {
    padding: 0 2px 2px;
    white-space: nowrap;
    font-weight: 300;
    border-right: 1px solid #000;
    border-bottom: 1px solid #000;
}
td:last-child {
    border-color: #d4d4d4;
}
th {
    padding: 0 0 2px;
    background: #e6e6e6;
    border-right-color: #9a9a9a;
    border-bottom-color: #bbb;
    color: #222;
}
thead th {
    height: 25px;
    padding-bottom: 1px;
    background: #d2d2d2;
    color: #217346;
    border-right: 1px solid #aaa;
    border-bottom: 2px solid #217346;
}
thead .corner {
    background: linear-gradient(135deg, #e6e6e6 0 50%, #b2b2b2 50%) no-repeat 8px 5px / 17px 17px #e6e6e6;
    border-bottom-color: #e6e6e6;
}
tbody td:nth-child(2), tbody td:nth-child(6), tbody td:nth-child(7) {
    text-align: right;
}
.caption td {
    border-right-color: #d4d4d4;
}
.caption td:nth-child(2) {
    text-align: left;
}
.fields {
    height: 26px;
}
tbody .fields td {
    background: #f0c16e;
    border-bottom: 2px solid #217346;
    text-align: center;
}
tbody .fields td:last-child {
    background: #fff;
}
.sel td {
    background: #c6c6c6;
}
.sel td:last-child {
    border-color: #a6a6a6;
}
.sel th {
    background: #d3f0e0;
    color: #217346;
    border-right: 2px solid #217346;
}
.sel.first {
    height: 26px;
}
.sel.first td {
    border-top: 1px solid #fff;
}
.first td:nth-child(2) {
    background: #fff;
}
.sel.last td {
    border-bottom: 2px solid #217346;
    padding-bottom: 1px;
}
.handle {
    position: absolute;
    left: 28px;
    top: 299px;
    width: 6px;
    height: 6px;
    background: #217346;
    border: 1px solid #fff;
    border-width: 1px 1px 0 0;
}
a {
    color: #0563c1;
    text-underline-offset: 3px;
}
.sel a {
    color: #0b4f97;
}

/* スクロールバー */
.vscroll {
    flex: none;
    width: 22px;
    display: flex;
    flex-direction: column;
    padding: 2px 3px 0 4px;
    background: #e6e6e6;
}
.arrow {
    flex: none;
    width: 15px;
    height: 15px;
    display: flex;
    align-items: center;
    justify-content: center;
    background: #fff;
    border: 1px solid #ababab;
}
.arrow::after, .nav::after {
    content: "";
    border: 4px solid transparent;
}
.up::after { border-top: 0; border-bottom-color: #777; }
.down::after { border-bottom: 0; border-top-color: #777; }
.left::after { border-left: 0; border-right-color: #777; }
.right::after { border-right: 0; border-left-color: #777; }
.track {
    flex: 1;
    background: #dadada;
}
.thumb {
    background: #fff;
    border: 1px solid #ababab;
}
.vscroll .thumb {
    height: 32%;
}

/* ミニツールバーと右クリックメニュー */
.mini {
    position: absolute;
    left: 555px;
    top: 19px;
    width: 271px;
    padding: 3px 3px 2px;
    background: #fff;
    border: 1px solid #c6c6c6;
    box-shadow: 1px 1px 3px rgba(0, 0, 0, 0.3);
}
.mini .row {
    height: 24px;
}
.menu {
    position: absolute;
    left: 555px;
    top: 89px;
    width: 205px;
    padding: 1px;
    background: #fff;
    border: 1px solid #c6c6c6;
    box-shadow: 2px 2px 3px rgba(0, 0, 0, 0.3);
    color: #555;
}
.item {
    width: 100%;
    height: 24px;
    display: grid;
    grid-template-columns: 16px 1fr;
    align-items: center;
    column-gap: 11px;
    padding-left: 4px;
    text-align: left;
}
.heading {
    column-gap: 5px;
}
.heading strong {
    height: 22px;
    padding: 3px 8px;
    background: #e9e9e9;
}
.item.paste {
    height: 28px;
}
.off {
    color: #aaa;
}
.hover {
    background: #c6c6c6;
    color: #222;
}
.menu hr {
    margin: 0 2px 1px 33px;
    border: none;
    border-top: 1px solid #e1e1e1;
}
.frame {
    position: absolute;
    left: 556px;
    top: 336px;
    width: 204px;
    height: 34px;
    border: 7px solid #f00;
    border-radius: 5px;
}
.step {
    position: absolute;
    left: 780px;
    top: 335px;
    width: 35px;
    height: 35px;
    border: 1px solid #f00;
    border-radius: 50%;
    background: #fff;
    box-shadow: 0 0 0 2px #fff, 1px 1px 4px 3px rgba(0, 0, 0, 0.4);
    color: #f00;
    font: 900 28px/31px "Noto Sans CJK JP", sans-serif;
    text-align: center;
}

/* シート見出し */
.sheet-tabs {
    flex: none;
    height: 28px;
    display: flex;
    align-items: center;
    padding: 0 21px;
    border-top: 1px solid #999;
}
.nav {
    width: 28px;
    height: 20px;
    display: flex;
    align-items: center;
    padding-left: 6px;
}
.prev::after { border-left: 0; border-right-color: #bbb; }
.next::after { border-right: 0; border-left-color: #bbb; }
.sheet-tab {
    align-self: flex-start;
    width: 76px;
    height: 25px;
    margin: -1px 33px 0 23px;
    background: #fff;
    border: 1px solid #aaa;
    border-top: none;
    border-bottom: 2px solid #217346;
    color: #217346;
    font-size: 13px;
    padding-top: 2px;
}
.sheet-tabs .dots {
    margin-left: auto;
}
.hscroll {
    flex: 0 0 510px;
    height: 15px;
    display: flex;
}
.hscroll .thumb {
    width: 91%;
    height: 15px;
}

/* ステータスバー */
.status {
    flex: none;
    height: 21px;
    display: flex;
    align-items: center;
    padding: 0 7px;
    background: #f1f1f1;
    border-top: 1px solid #c6c6c6;
    color: #555;
}
.status > svg {
    margin-left: 20px;
}
.sums {
    display: flex;
    gap: 20px;
    margin: 0 19px 0 auto;
}
.view {
    width: 38px;
    height: 20px;
    display: flex;
    align-items: center;
    justify-content: center;
}
.view.on {
    background: #c6c6c6;
}
.zoom {
    width: 16px;
    display: flex;
    justify-content: center;
}
.status input {
    appearance: none;
    width: 100px;
    height: 12px;
    background: linear-gradient(#aaa, #aaa) no-repeat center / 100% 1px;
}
.status input::-webkit-slider-thumb {
    appearance: none;
    width: 4px;
    height: 12px;
    background: #666;
}
.rate {
    width: 45px;
    text-align: right;
}
```
